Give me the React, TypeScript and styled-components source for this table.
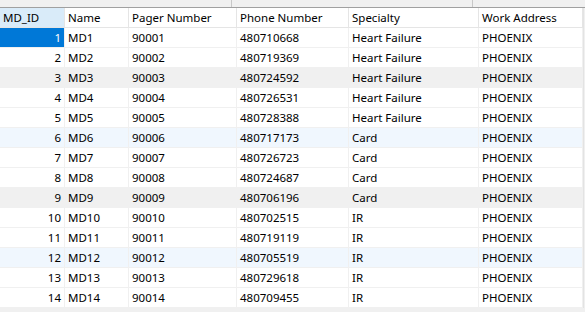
import styled, { createGlobalStyle } from "styled-components";

const Global = createGlobalStyle`
  html, body { margin: 0; padding: 0; background: #f0f0f0; }
  body { font-family: "Noto Sans", "Open Sans", Arial, sans-serif; font-size: 11px; color: #000; }
`;

interface Doctor {
  id: number;
  pager: string;
  phone: string;
  specialty: string;
}

const phones = [
  "480710668", "480719369", "480724592", "480726531", "480728388", "480717173", "480726723",
  "480724687", "480706196", "480702515", "480719119", "480705519", "480729618", "480709455",
];

const doctors: Doctor[] = phones.map((p, i) => ({
  id: i + 1,
  pager: String(90001 + i),
  phone: p,
  specialty: i < 5 ? "Heart Failure" : i < 9 ? "Card" : "IR",
}));

const columns = ["MD_ID", "Name", "Pager Number", "Phone Number", "Specialty", "Work Address"];

const Frame = styled.div`
  width: 585px;
  height: 312px;
  overflow: hidden;
  background: #f0f0f0;
  display: flex;
  flex-direction: column;
`;

const TopBar = styled.div`
  height: 7px;
  flex: none;
  border-bottom: 1px solid #a0a0a0;
  display: grid;
  grid-template-columns: 232px 241px 1fr;
`;

const Tick = styled.div`
  border-right: 1px solid #c8c8c8;
`;

const Grid = styled.div`
  width: 583px;
  display: grid;
  grid-template-columns: 65px 64px 108px 112px 130px 104px;
  background: #fff;
  border-right: 1px solid #e3e3e3;
`;

const HeadCell = styled.div<{ $active?: boolean }>`
  height: 19px;
  line-height: 20px;
  padding: 0 3px;
  font-size: 11.5px;
  background: ${(p) => (p.$active ? "#d9ebf9" : "#fff")};
  border-right: 1px solid #e5e5e5;
  border-bottom: 1px solid #e5e5e5;
  white-space: nowrap;
  overflow: hidden;
`;

const Cell = styled.div<{ $bg: string; $right?: boolean; $selected?: boolean }>`
  height: 19px;
  line-height: 20px;
  padding: 0 3px;
  font-size: 11.5px;
  background: ${(p) => (p.$selected ? "#0078d7" : p.$bg)};
  color: ${(p) => (p.$selected ? "#fff" : "#000")};
  text-align: ${(p) => (p.$right ? "right" : "left")};
  border-right: 1px solid #f0f0f0;
  border-bottom: 1px solid #f0f0f0;
  white-space: nowrap;
  overflow: hidden;
`;

const rowBg = (i: number) => {
  if (i === 2 || i === 8) return "#f0f0f0";
  if (i === 5 || i === 11) return "#f0f7fe";
  return "#fff";
};

export default function App() {
  return (
    <Frame>
      <Global />
      <TopBar>
        <Tick />
        <Tick />
        <div />
      </TopBar>
      <Grid>
        {columns.map((c, i) => (
          <HeadCell key={c} $active={i === 0}>
            {c}
          </HeadCell>
        ))}
        {doctors.map((d, i) => {
          const bg = rowBg(i);
          return [
            <Cell key={`id${d.id}`} $bg={bg} $right $selected={i === 0}>
              {d.id}
            </Cell>,
            <Cell key={`n${d.id}`} $bg={bg}>MD{d.id}</Cell>,
            <Cell key={`p${d.id}`} $bg={bg}>{d.pager}</Cell>,
            <Cell key={`ph${d.id}`} $bg={bg}>{d.phone}</Cell>,
            <Cell key={`s${d.id}`} $bg={bg}>{d.specialty}</Cell>,
            <Cell key={`w${d.id}`} $bg={bg}>PHOENIX</Cell>,
          ];
        })}
      </Grid>
    </Frame>
  );
}
